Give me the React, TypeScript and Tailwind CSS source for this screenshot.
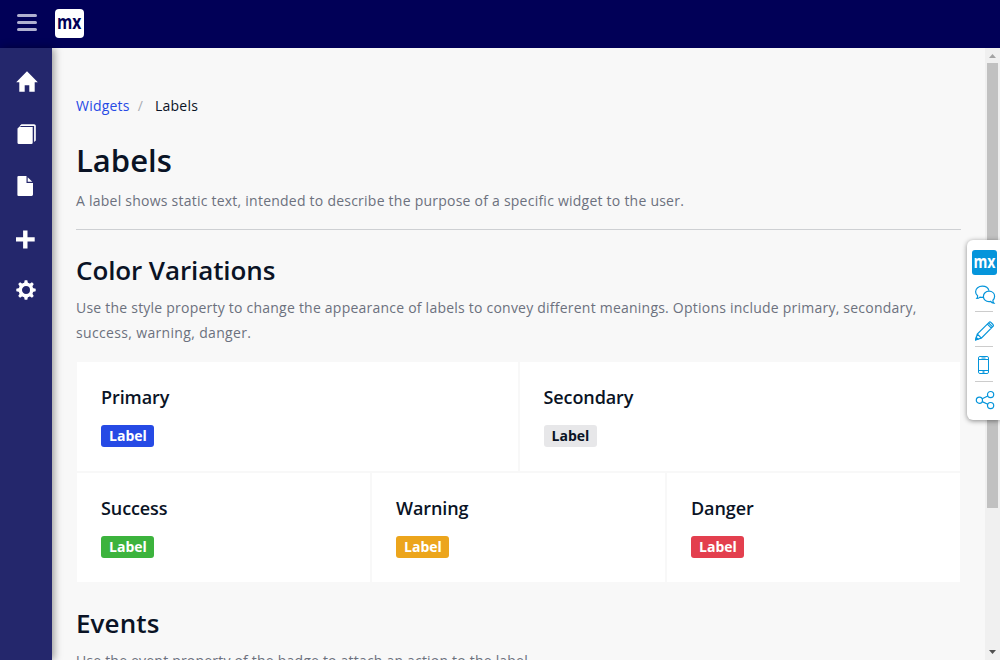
import React from "react";

function HomeIcon() {
  return (
    <svg width="22" height="22" viewBox="0 0 22 22" fill="white">
      <path d="M11 0.2 L21.8 11.2 H18.7 V20.7 H13.3 V14.2 H8.7 V20.7 H3.3 V11.2 H0.2 Z" />
    </svg>
  );
}

function PagesIcon() {
  return (
    <svg width="19" height="20" viewBox="0 0 19 20" fill="white">
      <path d="M3.4 3 H15.7 V18.5 Q15.7 20 14.4 20 H1.9 Q0.5 20 0.5 18.7 V4.6 L3.4 1.8 Z" />
      <path d="M3 1.5 L4.5 0.2 H17 Q18.8 0.2 18.8 1.7 V16.5 L17.1 18 V2 H3 Z" />
    </svg>
  );
}

function FileIcon() {
  return (
    <svg width="16" height="20" viewBox="0 0 16 20" fill="white">
      <path d="M0.5 0 H9.5 V7 H16 V18.6 Q16 20 14.6 20 H1.5 Q0.4 20 0.4 19 V1 Q0.4 0 1.5 0 Z" />
      <path d="M10.7 1.2 L15.3 5.8 H10.7 Z" />
    </svg>
  );
}

function PlusIcon() {
  return (
    <svg className="mt-[2px]" width="19" height="19" viewBox="0 0 19 19" fill="white">
      <path d="M7.1 0.5 H11.5 V7.3 H18.7 V11.6 H11.5 V18.5 H7.1 V11.6 H0 V7.3 H7.1 Z" />
    </svg>
  );
}

function GearIcon() {
  const angles = [0, 45, 90, 135, 180, 225, 270, 315];
  return (
    <svg width="20" height="20" viewBox="0 0 20 20">
      <circle cx="10" cy="10" r="5.7" fill="none" stroke="white" strokeWidth="3.4" />
      {angles.map((a) => (
        <path key={a} d="M8 3.4 L8.7 0.3 H11.3 L12 3.4 Z" fill="white" transform={`rotate(${a} 10 10)`} />
      ))}
    </svg>
  );
}

function NavItem({ children, shift = "pl-4" }: { children: React.ReactNode; shift?: string }) {
  return <a className={`flex h-[52px] items-center ${shift}`}>{children}</a>;
}

function Badge({ className }: { className: string }) {
  return (
    <span className={`flex h-[22px] w-[53px] items-center justify-center rounded-[3px] pl-px text-sm leading-none font-bold ${className}`}>
      Label
    </span>
  );
}

function Card({ title, badge }: { title: string; badge: string }) {
  return (
    <div className="h-[111px] min-w-0 flex-1 border border-[#f8f8f8] bg-white px-6 pt-6">
      <h3 className="mb-4 text-lg leading-[23px] font-semibold tracking-[-0.1px]">{title}</h3>
      <Badge className={badge} />
    </div>
  );
}

function Toolbox() {
  return (
    <aside className="absolute top-[240px] right-0 flex h-[180px] w-[33px] flex-col rounded-l-md bg-white pt-[10px] pl-[5px] shadow-[0_1px_5px_rgba(0,0,0,0.45)]">
      <div className="flex h-[25px] w-[25px] items-center justify-center rounded-[3px] bg-[#0595db]">
        <svg className="overflow-visible" width="25" height="25" viewBox="0 0 25 25">
          <text x="1.4" y="18.2" textLength="22" lengthAdjust="spacingAndGlyphs" fill="white" fontFamily="Open Sans, sans-serif" fontWeight="700" fontSize="18.5">mx</text>
        </svg>
      </div>
      <div className="flex h-[36px] w-[24px] items-center pt-[3px]">
        <svg className="ml-[3px]" width="21" height="20" viewBox="0 0 21 20" fill="none" stroke="#0595db" strokeWidth="1.2">
          <path d="M8.5 12.2 Q6.5 12.6 5 12.1 Q3.5 13.5 1.8 13.5 Q2.8 12.2 2.6 10.7 Q0.6 9.2 0.6 6.8 C0.6 3.5 3.7 1.2 7.3 1.2 C10.6 1.2 13.3 3 13.9 5.7" />
          <path d="M14 6.2 C17.2 6.2 19.6 8.4 19.6 11.3 Q19.6 13.7 17.9 15.2 Q17.8 17 18.9 18.2 Q16.8 18 15.6 16.4 Q14.8 16.6 14 16.6 C10.8 16.6 8.4 14.3 8.4 11.4 C8.4 8.5 10.8 6.2 14 6.2 Z" />
        </svg>
      </div>
      <div className="ml-[3px] h-px w-[18px] bg-[#ccc]" />
      <div className="flex h-[34px] items-center">
        <svg className="mt-[3px] ml-[3px]" width="20" height="20" viewBox="0 0 21 21" fill="none" stroke="#0595db" strokeWidth="1.25">
          <path d="M0.8 19.7 L2.4 13.6 L14.8 1.4 Q15.7 0.6 16.7 1.5 L18.9 3.7 Q19.8 4.7 18.9 5.6 L6.6 18 Z M2.4 13.6 L6.6 18 M13 3.2 L17.2 7.4 M14.3 2 L18.4 6.1" />
          <path d="M0.5 20 L1.3 17.3 L3.2 19.2 Z" fill="#0595db" />
        </svg>
      </div>
      <div className="ml-[3px] h-px w-[18px] bg-[#ccc]" />
      <div className="flex h-[34px] items-center">
        <svg className="mt-[2px] ml-[6px]" width="12" height="18" viewBox="0 0 12 18" fill="none" stroke="#0595db">
          <rect x="0.5" y="0.5" width="10" height="17" rx="1.4" />
          <path d="M0.5 3.5 H10.5 M0.5 14.5 H10.5 M3.5 2 H7.5" />
          <path d="M4.5 16 H6.5" strokeWidth="1.5" />
        </svg>
      </div>
      <div className="ml-[3px] h-px w-[18px] bg-[#ccc]" />
      <div className="flex h-[36px] items-center">
        <svg className="ml-[3px]" width="20" height="20" viewBox="0 0 20 20" fill="none" stroke="#0595db" strokeWidth="1.2">
          <circle cx="4.4" cy="10.2" r="3.1" />
          <circle cx="15.6" cy="4.6" r="3.1" />
          <circle cx="15.6" cy="15.6" r="3.1" />
          <path d="M7.2 8.8 L12.8 6 M7.2 11.6 L12.8 14.2" />
        </svg>
      </div>
    </aside>
  );
}

export default function App() {
  return (
    <div className="relative flex h-[660px] w-[1000px] flex-col overflow-hidden bg-[#f8f8f8] font-['Open_Sans',sans-serif] text-sm text-[#0a1325]">
      <header className="flex h-12 shrink-0 items-center bg-[#010057] pl-[17px]">
        <div className="-mt-[3px] flex w-5 flex-col gap-1">
          <span className="h-[3px] rounded-full bg-[#b0b0d0]" />
          <span className="h-[3px] rounded-full bg-[#b0b0d0]" />
          <span className="h-[3px] rounded-full bg-[#b0b0d0]" />
        </div>
        <div className="-mt-px ml-[18px] h-[29px] w-[29px] rounded bg-white">
          <svg className="overflow-visible" width="29" height="29" viewBox="0 0 29 29">
            <text x="2" y="20" textLength="24.4" lengthAdjust="spacingAndGlyphs" fill="#010057" fontFamily="Open Sans, sans-serif" fontWeight="700" fontSize="19.5">mx</text>
          </svg>
        </div>
      </header>
      <div className="flex min-h-0 flex-1">
        <nav className="z-10 w-[52px] shrink-0 bg-[#24276c] pt-2 shadow-[2px_0_8px_rgba(0,0,0,0.4)]">
          <NavItem><HomeIcon /></NavItem>
          <NavItem shift="pl-[17px]"><PagesIcon /></NavItem>
          <NavItem shift="pl-[17px]"><FileIcon /></NavItem>
          <NavItem><PlusIcon /></NavItem>
          <NavItem><GearIcon /></NavItem>
        </nav>
        <main className="min-w-0 flex-1 overflow-hidden pr-6 pl-6">
          <div className="mt-12 flex h-5 items-center leading-5 tracking-[0.22px]">
            <a className="text-[#264ae5]">Widgets</a>
            <span className="ml-2 text-[#a9acb3]">/</span>
            <span className="ml-3">Labels</span>
          </div>
          <h1 className="mt-6 text-[31px] leading-10 font-semibold">Labels</h1>
          <p className="mt-2 leading-[25px] tracking-[0.235px] text-[#6c717e]">
            A label shows static text, intended to describe the purpose of a specific widget to the user.
          </p>
          <hr className="mt-4 border-[#ced0d3]" />
          <h2 className="mt-[23px] text-[26px] leading-[34px] font-semibold tracking-[-0.1px]">Color Variations</h2>
          <p className="mt-2 leading-[25px] tracking-[0.225px] text-[#6c717e]">
            Use the style property to change the appearance of labels to convey different meanings. Options include primary, secondary, <span className="tracking-[0.34px]">success, warning, danger.</span>
          </p>
          <section className="mt-4">
            <div className="flex">
              <Card title="Primary" badge="bg-[#264ae5] text-white" />
              <Card title="Secondary" badge="bg-[#e7e7e9] text-[#0a1325]" />
            </div>
            <div className="flex">
              <Card title="Success" badge="bg-[#3cb33d] text-white" />
              <Card title="Warning" badge="bg-[#eca51c] text-white" />
              <Card title="Danger" badge="bg-[#e33f4e] text-white" />
            </div>
          </section>
          <h2 className="mt-[23px] text-[26px] leading-[34px] font-semibold tracking-[0.1px]">Events</h2>
          <p className="mt-2 leading-[25px] tracking-[0.2px] text-[#6c717e]">Use the event property of the badge to attach an action to the label.</p>
        </main>
        <div className="flex w-[15px] shrink-0 flex-col items-center bg-[#f0f0f0]">
          <svg className="shrink-0" width="15" height="15" viewBox="0 0 15 15" fill="#a3a3a3">
            <path d="M4 10 L7.5 6 L11 10 Z" />
          </svg>
          <div className="h-[445px] w-[11px] shrink-0 bg-[#c1c1c1]" />
          <div className="flex-1" />
          <svg className="shrink-0" width="15" height="15" viewBox="0 0 15 15" fill="#505050">
            <path d="M4 5 H11 L7.5 9 Z" />
          </svg>
        </div>
      </div>
      <Toolbox />
    </div>
  );
}
